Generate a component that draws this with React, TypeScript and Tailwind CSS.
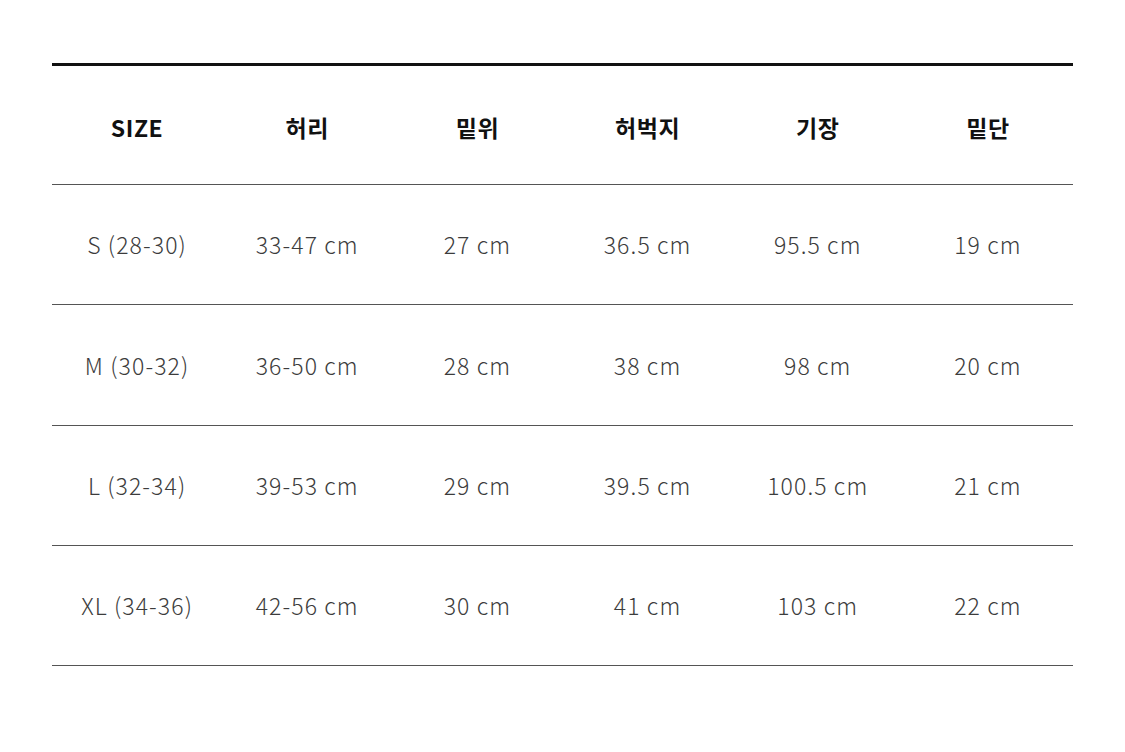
const headers = ["SIZE", "허리", "밑위", "허벅지", "기장", "밑단"];

const rows = [
  ["S (28-30)", "33-47 cm", "27 cm", "36.5 cm", "95.5 cm", "19 cm"],
  ["M (30-32)", "36-50 cm", "28 cm", "38 cm", "98 cm", "20 cm"],
  ["L (32-34)", "39-53 cm", "29 cm", "39.5 cm", "100.5 cm", "21 cm"],
  ["XL (34-36)", "42-56 cm", "30 cm", "41 cm", "103 cm", "22 cm"],
];

export default function App() {
  return (
    <div
      className="w-[1125px] h-[752px] bg-white pt-[63px] px-[52px]"
      style={{ fontFamily: '"Noto Sans CJK KR", "Noto Sans", sans-serif' }}
    >
      <div className="w-[1021px] border-t-[3px] border-[#111]">
        <div className="grid grid-cols-6 h-[119px] border-b border-[#555] items-center">
          {headers.map((h) => (
            <div key={h} className="text-center text-[23px] font-bold text-[#111] tracking-[0.6px] pt-[5px]">
              {h}
            </div>
          ))}
        </div>
        {rows.map((r) => (
          <div key={r[0]} className="grid grid-cols-6 h-[120.3px] border-b border-[#555] items-center">
            {r.map((c, i) => (
              <div key={i} className="text-center text-[23px] font-light text-[#3c3c3c] tracking-[1.1px]">
                {c}
              </div>
            ))}
          </div>
        ))}
      </div>
    </div>
  );
}
